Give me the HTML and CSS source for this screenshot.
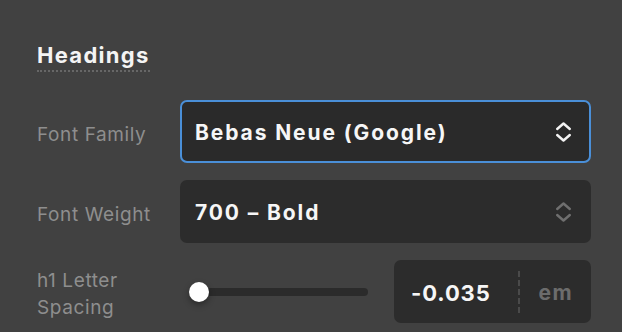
FILE: index.html
```html
<!DOCTYPE html>
<html>
<head>
<meta charset="utf-8">
<link rel="stylesheet" href="styles.css">
</head>
<body>
<div class="panel">
  <h2 class="heading"><span>Headings</span></h2>
  <div class="row">
    <label class="label">Font Family</label>
    <div class="select focused">
      <span class="value">Bebas Neue (Google)</span>
      <svg class="chev" width="17" height="22" viewBox="0 0 17 22"><path d="M2.2 8 L8.5 2.5 L14.8 8 M2.2 14 L8.5 19.5 L14.8 14" fill="none" stroke="currentColor" stroke-width="2.4" stroke-linecap="round" stroke-linejoin="round"/></svg>
    </div>
  </div>
  <div class="row">
    <label class="label">Font Weight</label>
    <div class="select">
      <span class="value">700 – Bold</span>
      <svg class="chev dim" width="17" height="22" viewBox="0 0 17 22"><path d="M2.2 8 L8.5 2.5 L14.8 8 M2.2 14 L8.5 19.5 L14.8 14" fill="none" stroke="currentColor" stroke-width="2.4" stroke-linecap="round" stroke-linejoin="round"/></svg>
    </div>
  </div>
  <div class="row">
    <label class="label two">h1 Letter<br>Spacing</label>
    <div class="slider-group">
      <div class="slider">
        <div class="track"></div>
        <div class="thumb"></div>
      </div>
      <div class="numbox">
        <span class="num">-0.035</span>
        <span class="divider"></span>
        <span class="unit">em</span>
      </div>
    </div>
  </div>
</div>
</body>
</html>
```
FILE: styles.css
```css
html, body {
  margin: 0;
  padding: 0;
  background: #414141;
  font-family: Inter, "Noto Sans", "Liberation Sans", sans-serif;
  -webkit-font-smoothing: antialiased;
}
.panel {
  padding: 42px 31px 0 37px;
}
.heading {
  margin: 0 0 28px 0;
  font-size: 22px;
  font-weight: 700;
  line-height: 26px;
  color: #f4f4f4;
}
.heading span {
  display: inline-block;
  letter-spacing: 1.3px;
  padding-bottom: 2px;
  border-bottom: 2px dotted #676767;
}
.row {
  display: grid;
  grid-template-columns: 143px 1fr;
  align-items: center;
  margin-bottom: 17px;
}
.label {
  color: #8e8e8e;
  font-size: 19px;
  line-height: 27px;
  letter-spacing: 0.6px;
  padding-top: 5px;
}
.select {
  height: 63px;
  box-sizing: border-box;
  background: #2c2c2c;
  border-radius: 7px;
  display: flex;
  align-items: center;
  justify-content: space-between;
  padding: 0 17px 0 13px;
  border: 2px solid transparent;
}
.select.focused {
  border-color: #4a8fd8;
  background: #2a2a2a;
}
.value {
  color: #f6f6f6;
  font-size: 21px;
  font-weight: 700;
  letter-spacing: 1.9px;
  padding-top: 2px;
}
.chev {
  color: #f4f4f4;
  display: block;
}
.chev.dim {
  color: #6f6f6f;
}
.slider-group {
  display: flex;
  align-items: center;
  gap: 26px;
}
.slider {
  flex: 1;
  position: relative;
  height: 24px;
  padding-left: 9px;
  display: flex;
  align-items: center;
}
.track {
  flex: 1;
  height: 8px;
  background: #2b2b2b;
  border-radius: 4px;
}
.thumb {
  position: absolute;
  left: 9px;
  top: 2px;
  width: 20px;
  height: 20px;
  border-radius: 50%;
  background: #ffffff;
  box-shadow: 0 3px 6px rgba(0,0,0,0.35);
}
.numbox {
  width: 197px;
  height: 63px;
  box-sizing: border-box;
  background: #2c2c2c;
  border-radius: 7px;
  display: flex;
  align-items: center;
  padding: 0 16px 0 17px;
}
.num {
  color: #f6f6f6;
  font-size: 22px;
  font-weight: 700;
  width: 107px;
  letter-spacing: 0.9px;
  padding-top: 2px;
}
.divider {
  width: 0;
  height: 42px;
  border-left: 2px dashed #4a4a4a;
}
.unit {
  flex: 1;
  text-align: right;
  color: #6c6c6c;
  font-size: 21px;
  font-weight: 700;
  letter-spacing: 1.4px;
  margin-right: 2px;
  padding-top: 2px;
}
```
